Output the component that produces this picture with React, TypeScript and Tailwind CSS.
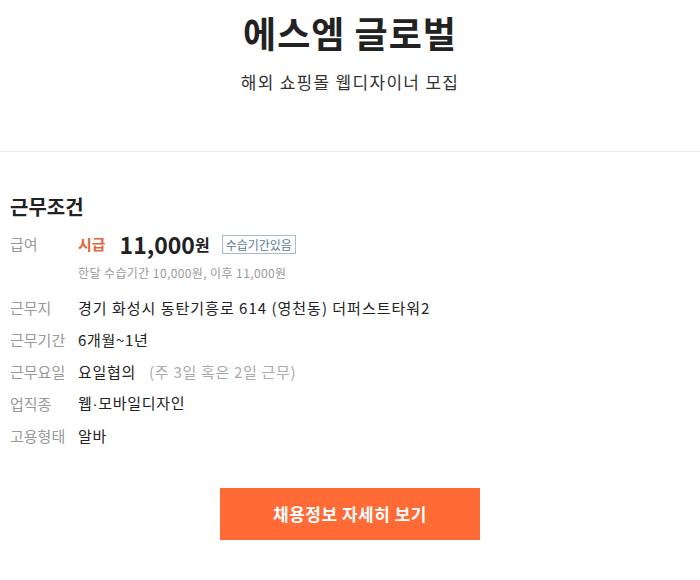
import React from "react";

const font = { fontFamily: '"Noto Sans CJK KR", "Noto Sans", sans-serif' };

function Row({ label, children, wide }: { label: string; children: React.ReactNode; wide?: boolean }) {
  return (
    <div className="flex items-center h-[32px]">
      <div className="w-[68px] text-[15px] text-[#999999]">{label}</div>
      <div className={wide ? "text-[15px] text-[#222222] tracking-[1px]" : "text-[15px] text-[#222222] tracking-[0.7px]"}>{children}</div>
    </div>
  );
}

export default function App() {
  return (
    <div className="w-[700px] h-[580px] bg-white overflow-hidden" style={font}>
      <div className="flex flex-col items-center pt-[7px] h-[152px] border-b border-[#ebebeb]">
        <h1 className="text-[36px] font-bold text-[#222222] leading-[50px] tracking-[1px]">에스엠 글로벌</h1>
        <p className="text-[17px] text-[#333333] mt-[12px] leading-[26px] tracking-[1.3px]">해외 쇼핑몰 웹디자이너 모집</p>
      </div>
      <div className="px-[10px] pt-[40px]">
        <h2 className="text-[20px] font-bold text-[#222222] leading-[30px]">근무조건</h2>
        <div className="mt-[8px]">
          <div className="flex items-start">
            <div className="w-[68px] text-[15px] text-[#999999] leading-[28px]">급여</div>
            <div>
              <div className="flex items-center h-[28px]">
                <span className="text-[15px] font-bold text-[#e0653a]">시급</span>
                <span className="ml-[14px] text-[23px] font-bold text-[#222222] leading-none">11,000</span>
                <span className="text-[16px] font-bold text-[#222222]">원</span>
                <span className="ml-[12px] border border-[#a9bcc9] text-[12px] text-[#5b7d96] px-[3px] leading-[17px]">수습기간있음</span>
              </div>
              <div className="text-[12px] text-[#999999] leading-[20px] mt-[5px] tracking-[0.4px]">한달 수습기간 10,000원, 이후 11,000원</div>
            </div>
          </div>
          <div className="mt-[9px]">
            <Row label="근무지" wide>경기 화성시 동탄기흥로 614 (영천동) 더퍼스트타워2</Row>
            <Row label="근무기간">6개월~1년</Row>
            <Row label="근무요일">
              요일협의 <span className="ml-[9px] text-[#aaaaaa]">(주 3일 혹은 2일 근무)</span>
            </Row>
            <Row label="업직종">
              웹<span style={{ fontFamily: '"Liberation Sans", sans-serif' }}>·</span>모바일디자인
            </Row>
            <Row label="고용형태">알바</Row>
          </div>
        </div>
        <div className="flex justify-center mt-[36px]">
          <button className="w-[260px] h-[52px] bg-[#ff6a35] text-white text-[17px] font-bold tracking-[0.5px]">채용정보 자세히 보기</button>
        </div>
      </div>
    </div>
  );
}
